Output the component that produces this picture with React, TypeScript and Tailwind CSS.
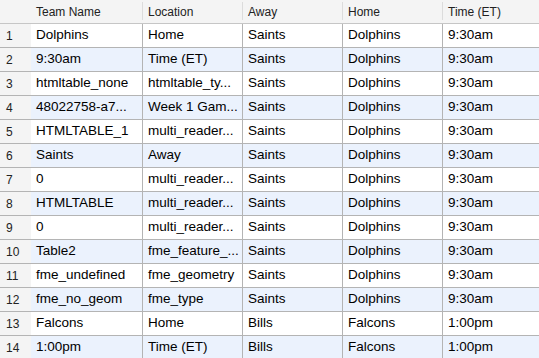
import React from "react";

const rows: string[][] = [
  ["Dolphins", "Home", "Saints", "Dolphins", "9:30am"],
  ["9:30am", "Time (ET)", "Saints", "Dolphins", "9:30am"],
  ["htmltable_none", "htmltable_ty...", "Saints", "Dolphins", "9:30am"],
  ["48022758-a7...", "Week 1 Gam...", "Saints", "Dolphins", "9:30am"],
  ["HTMLTABLE_1", "multi_reader...", "Saints", "Dolphins", "9:30am"],
  ["Saints", "Away", "Saints", "Dolphins", "9:30am"],
  ["0", "multi_reader...", "Saints", "Dolphins", "9:30am"],
  ["HTMLTABLE", "multi_reader...", "Saints", "Dolphins", "9:30am"],
  ["0", "multi_reader...", "Saints", "Dolphins", "9:30am"],
  ["Table2", "fme_feature_...", "Saints", "Dolphins", "9:30am"],
  ["fme_undefined", "fme_geometry", "Saints", "Dolphins", "9:30am"],
  ["fme_no_geom", "fme_type", "Saints", "Dolphins", "9:30am"],
  ["Falcons", "Home", "Bills", "Falcons", "1:00pm"],
  ["1:00pm", "Time (ET)", "Bills", "Falcons", "1:00pm"],
];

const headers = ["Team Name", "Location", "Away", "Home", "Time (ET)"];
const widths = ["w-[112px]", "w-[100px]", "w-[100px]", "w-[100px]", "flex-1"];

export default function App() {
  return (
    <div
      className="w-[539px] h-[358px] overflow-hidden bg-white text-black"
      style={{ fontFamily: '"Liberation Sans", Arial, sans-serif' }}
    >
      <div className="flex h-[24px] bg-[#f4f4f4] border-b border-[#c6c6c6]">
        <div className="w-[31px] shrink-0" />
        {headers.map((h, i) => (
          <div key={h} className={`${widths[i]} shrink-0 flex items-center relative`}>
            <span className="pl-[5px] text-[12px] text-[#222]">{h}</span>
            {i < 4 && (
              <div className="absolute right-0 top-[2px] h-[18px] w-px bg-[#dcdcdc]" />
            )}
          </div>
        ))}
      </div>
      {rows.map((r, ri) => {
        const blue = ri % 2 === 1;
        return (
          <div key={ri} className="flex h-[24px] border-b border-[#b4b4b4]">
            <div className="w-[31px] shrink-0 bg-[#f4f4f4] flex items-center pl-[6px] text-[12px] text-[#222]">
              {ri + 1}
            </div>
            {r.map((c, ci) => (
              <div
                key={ci}
                className={`${widths[ci]} shrink-0 flex items-center pl-[5px] text-[13.5px] whitespace-nowrap overflow-hidden ${
                  ci < 4 ? "border-r border-[#b4b4b4]" : ""
                } ${blue ? "bg-[#ebf2fd]" : "bg-white"}`}
              >
                {c}
              </div>
            ))}
          </div>
        );
      })}
    </div>
  );
}
